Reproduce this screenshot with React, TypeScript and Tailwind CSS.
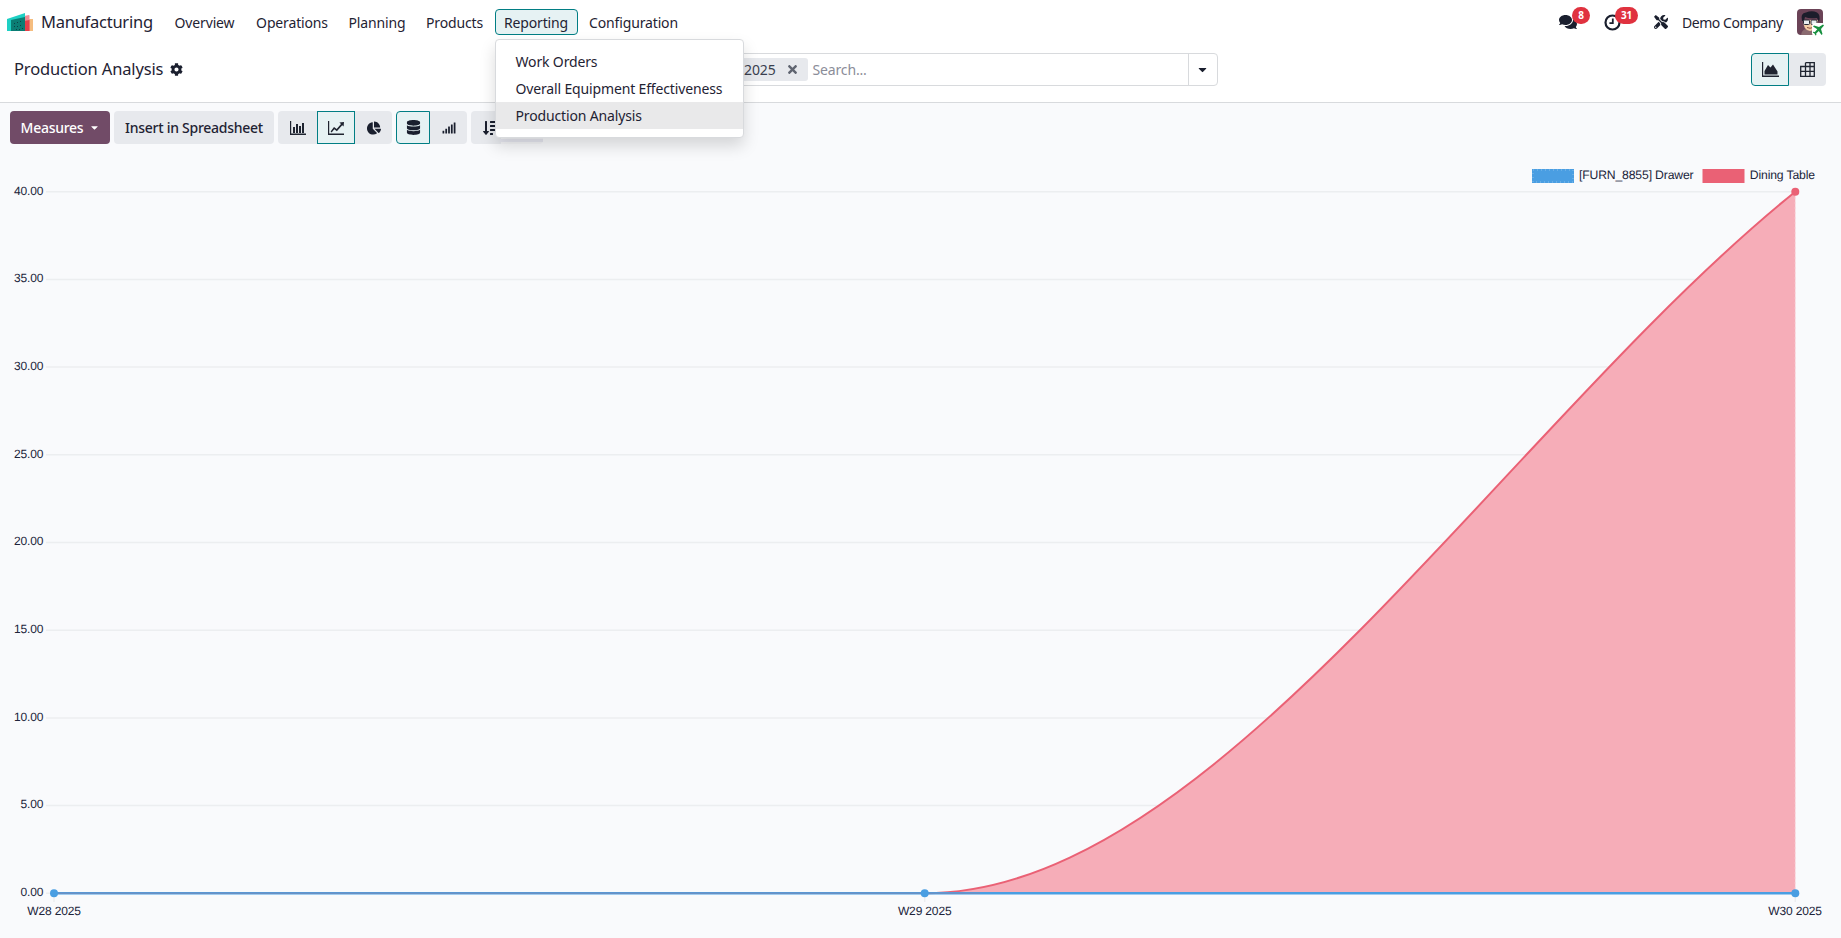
import React from "react";
import { FaCog, FaComments, FaTools, FaChartPie, FaDatabase, FaSignal, FaSortAmountDown, FaCaretDown, FaTimes } from "react-icons/fa";

const NAV: [string, string][] = [
  ["Overview", "w-[80px]"],
  ["Operations", "w-[91px]"],
  ["Planning", "w-[75px]"],
  ["Products", "w-[76px]"],
];

function Logo() {
  return (
    <svg width="28" height="19" viewBox="0 0 28 19" className="shrink-0">
      <path d="M22 6 L27 6 L27 18 L22 18 Z" fill="#f5bd7f" />
      <path d="M18 3 L23 2 Q23.5 2 23.5 3 L23.5 18 L18 18 Z" fill="#f08c96" />
      <path d="M18 8 L23.5 7 L23.5 18 L18 18 Z" fill="#e63f4a" />
      <path d="M1 6 L19 0 L19 18 L1 18 Z" fill="#1ed0c4" />
      <path d="M5 7 L19 4 L19 18 L5 18 Z" fill="#0b7d74" />
      <path d="M8 10h1v1H8zM11 9h1v1h-1zM14 8h1v1h-1zM8 13h1v1H8zM11 13h1v1h-1zM14 12h1v1h-1zM16 15h1v1h-1zM10 16h1v1h-1zM13 16h1v1h-1z" fill="#0c3f45" />
    </svg>
  );
}

function Avatar() {
  return (
    <div className="relative w-[26px] h-[26px] shrink-0">
      <svg width="26" height="26" viewBox="0 0 26 26" className="rounded-[4px]">
        <rect width="26" height="26" fill="#6b4357" />
        <path d="M4 26 Q5 19 13 19 Q21 19 22 26 Z" fill="#8a6a70" />
        <path d="M6 11 Q6 21 13 22 Q21 21 21 11 Z" fill="#f4cfa8" />
        <path d="M5 12 Q3 4 9 3.5 Q15 1 20 3.5 Q24 6 22 13 L20 9 Q12 10 8 8 L7 12 Z" fill="#1b1d2b" />
        <rect x="6.5" y="11" width="6" height="4.5" rx="1" fill="#e9eef0" stroke="#2a2a35" strokeWidth="1" />
        <rect x="14" y="11" width="6" height="4.5" rx="1" fill="#e9eef0" stroke="#2a2a35" strokeWidth="1" />
        <path d="M10 18.5 Q13 20 16 18.5" stroke="#8a4b3c" strokeWidth="1" fill="none" />
      </svg>
      <svg width="13" height="13" viewBox="0 0 13 13" className="absolute right-[-2px] bottom-[-1px]">
        <rect width="13" height="13" rx="3" fill="#ffffff" />
        <path d="M11 1.5 L12 2.5 L9 6 L10.5 11 L9.5 12 L6.8 8 L4.2 10.5 L4.4 12 L3.5 12.5 L2.5 10.5 L0.8 9.5 L1.2 8.8 L2.8 9 L5.3 6.3 L1 3.5 L2 2.5 L7 4 Z" fill="#17903f" />
      </svg>
    </div>
  );
}

function ClockIcon() {
  return (
    <svg width="17" height="17" viewBox="0 0 17 17" fill="none" stroke="#1a1f2e">
      <circle cx="8.5" cy="8.5" r="7" strokeWidth="2.2" />
      <path d="M8.8 4.5 V9.2 H5.4" strokeWidth="1.8" />
    </svg>
  );
}
function BarIcon() {
  return (
    <svg width="16" height="14" viewBox="0 0 16 14" fill="#1f2430">
      <path d="M0 0h1.2v12.6H16V14H0z" />
      <path d="M3 6h2v6H3zM6 3h2v9H6zM9 5h2v7H9zM12 2h2v10h-2z" />
    </svg>
  );
}
function LineIcon() {
  return (
    <svg width="16" height="14" viewBox="0 0 16 14" fill="#1f2430">
      <path d="M0 0h1.2v12.6H16V14H0z" />
      <path d="M2.6 10.5 L6 6 L8.7 8 L13 3 L11.4 1.6 L16 1 L15.6 5.6 L14.2 4.2 L8.9 10.2 L6.3 8.2 L3.6 11.6 Z" />
    </svg>
  );
}
function AreaIcon() {
  return (
    <svg width="17" height="15" viewBox="0 0 17 15" fill="#1f2430">
      <path d="M0 0h1.2v13.6H17V15H0z" />
      <path d="M2.5 12.5 V9 L6 3 L8.5 5.5 L11 2.5 L15.5 9.5 V12.5 Z" />
    </svg>
  );
}
function TableIcon() {
  return (
    <svg width="15" height="15" viewBox="0 0 15 15" fill="none" stroke="#1f2430" strokeWidth="1.3">
      <path d="M5.5 .7 H14.3 V14.3 H.7 V4.5 H14.3 M.7 9.4 H14.3 M5.5 .7 V14.3 M10 .7 V14.3" />
    </svg>
  );
}

const GRID = [191.7, 279.4, 367.1, 454.8, 542.5, 630.2, 717.9, 805.6, 893.3];
const YL = ["40.00", "35.00", "30.00", "25.00", "20.00", "15.00", "10.00", "5.00", "0.00"];
const BLUE = "#4a9ee2";

function Chart() {
  const lab = { fontFamily: '"Liberation Sans", Arial, sans-serif', fontSize: 12, fill: "#20243a", textRendering: "geometricPrecision" as const };
  const leg = { ...lab, fontSize: 12.2 };
  return (
    <svg width="1841" height="788" viewBox="0 150 1841 788" className="block">
      {GRID.map((y) => (
        <line key={y} x1="46" x2="1795.3" y1={y} y2={y} stroke="#eceef0" strokeWidth="1.5" />
      ))}
      {[54, 924.7, 1795.3].map((x) => (
        <line key={x} x1={x} x2={x} y1="893" y2="902" stroke="#eceef0" strokeWidth="1.5" />
      ))}
      {YL.map((t, i) => (
        <text key={t} x="43.3" y={GRID[i] + 2.8} textAnchor="end" style={lab}>{t}</text>
      ))}
      <text x="54" y="915" textAnchor="middle" style={lab}>W28 2025</text>
      <text x="924.7" y="915" textAnchor="middle" style={lab}>W29 2025</text>
      <text x="1795" y="915" textAnchor="middle" style={lab}>W30 2025</text>

      <rect x="1532" y="169" width="42" height="14" fill={BLUE} />
      <rect x="1533" y="170" width="40" height="12" fill="none" stroke="#ffffff" strokeOpacity="0.45" strokeWidth="0.8" strokeDasharray="1 3" />
      <text x="1579" y="179" style={leg}>[FURN_8855] Drawer</text>
      <rect x="1702.5" y="169" width="42" height="14" fill="#EA6175" />
      <text x="1749.8" y="179" style={leg}>Dining Table</text>

      <path d="M924.7 893.3 C1215 893.3 1505 425.6 1795.3 191.7 L1795.3 893.3 Z" fill="#f6adb8" />
      <path d="M924.7 893.3 C1215 893.3 1505 425.6 1795.3 191.7" fill="none" stroke="#EA6175" strokeWidth="2" />
      <line x1="1795.3" x2="1795.3" y1="192" y2="893" stroke="#fbd9de" strokeWidth="1" strokeDasharray="2 3" />
      <line x1="54" x2="1795.3" y1="893.3" y2="893.3" stroke={BLUE} strokeWidth="2.4" />
      <line x1="54" x2="980" y1="893.3" y2="893.3" stroke="#6a90c4" strokeWidth="1.6" />
      <circle cx="1795.3" cy="191.7" r="4" fill="#EA6175" />
      <circle cx="54" cy="893.3" r="4" fill={BLUE} />
      <circle cx="924.7" cy="893.3" r="4" fill={BLUE} />
      <circle cx="1795.3" cy="893.3" r="4" fill={BLUE} />
    </svg>
  );
}

const ui = "font-['Noto_Sans',sans-serif] tracking-[-0.15px]";

export default function App() {
  return (
    <div className={`w-[1841px] h-[938px] overflow-hidden bg-[#f9fafc] text-[#1f2333] text-[14px] ${ui}`}>
      {/* top navbar */}
      <header className="relative z-20 h-[46px] pb-[2px] bg-white flex items-center pl-[6px] pr-[18px]">
        <Logo />
        <span className="ml-[7px] w-[123.5px] text-[16.5px] tracking-[-0.25px] whitespace-nowrap">Manufacturing</span>
        <nav className="flex items-center gap-[2px]">
          {NAV.map(([t, w]) => (
            <span key={t} className={`${w} h-[26px] flex items-center justify-center whitespace-nowrap`}>{t}</span>
          ))}
          <div className="relative">
            <span className="w-[83px] h-[26px] flex items-center justify-center rounded-[4px] border border-[#017e84] bg-[#e6f2f3]">Reporting</span>
            <div className="absolute left-0 top-[29.5px] w-[249px] h-[99px] pt-[8px] bg-white border border-[#d8dadd] rounded-[4px] shadow-[0_8px_16px_rgba(0,0,0,0.15)]">
              <div className="h-[27px] pl-[20px] flex items-center whitespace-nowrap">Work Orders</div>
              <div className="h-[27px] pl-[20px] flex items-center whitespace-nowrap">Overall Equipment Effectiveness</div>
              <div className="h-[27px] pl-[20px] flex items-center whitespace-nowrap bg-[#e9e9ea]">Production Analysis</div>
            </div>
          </div>
          <span className="w-[108px] h-[26px] flex items-center justify-center whitespace-nowrap">Configuration</span>
        </nav>
        <div className="ml-auto flex items-center">
          <div className="relative w-[18px] h-[16px] flex items-center">
            <FaComments className="text-[#1a1f2e]" size={18} />
            <span className="absolute left-[13px] top-[-7px] w-[18px] h-[17px] rounded-full bg-[#e0323f] text-white text-[10px] font-bold flex items-center justify-center">8</span>
          </div>
          <div className="relative ml-[27px] w-[17px] h-[16px] flex items-center">
            <ClockIcon />
            <span className="absolute left-[11px] top-[-7px] w-[23px] h-[17px] rounded-full bg-[#e0323f] text-white text-[10px] font-bold flex items-center justify-center">31</span>
          </div>
          <FaTools className="ml-[33px] text-[#1a1f2e]" size={14} />
          <span className="ml-[14px] w-[101px] tracking-[-0.45px] whitespace-nowrap">Demo Company</span>
          <div className="ml-[14px]"><Avatar /></div>
        </div>
      </header>

      {/* control panel */}
      <section className="h-[57px] pb-[10px] bg-white border-b border-[#d8dadd] flex items-center pl-[14px] pr-[15px]">
        <span className="text-[16.5px] w-[150px] whitespace-nowrap">Production Analysis</span>
        <FaCog className="ml-[6px] text-[#1a1f2e]" size={13} />
        <div className="ml-[417px] w-[617.5px] h-[33px] flex items-center border border-[#d8dadd] rounded-[4px]">
          <div className="ml-auto" />
          <span className="h-[23px] w-[90px] bg-[#e7e9ed] rounded-[3px] flex items-center justify-end pr-[9px] gap-[10px] text-[#3a3f4f]">
            <span className="whitespace-nowrap">2025</span>
            <FaTimes className="text-[#5f6470]" size={13} />
          </span>
          <span className="ml-[5px] w-[375px] text-[#8b8d99] whitespace-nowrap">Search...</span>
          <span className="w-[29px] h-full border-l border-[#d8dadd] flex items-center justify-center">
            <FaCaretDown className="text-[#1a1f2e]" size={13} />
          </span>
        </div>
        <div className="ml-auto flex h-[33px]">
          <span className="w-[38px] flex items-center justify-center rounded-l-[4px] border border-[#017e84] bg-[#e6f2f3]"><AreaIcon /></span>
          <span className="w-[37px] flex items-center justify-center rounded-r-[4px] bg-[#e7e9ed]"><TableIcon /></span>
        </div>
      </section>

      {/* toolbar */}
      <div className="h-[47px] pt-[8px] pl-[10px] flex items-start text-[14px] font-medium tracking-[-0.27px]">
        <span className="w-[100px] h-[33px] pl-[1px] rounded-[4px] bg-[#714B67] text-white flex items-center justify-center gap-[6px]">
          Measures <FaCaretDown size={11} />
        </span>
        <span className="ml-[4px] w-[160px] h-[33px] rounded-[4px] bg-[#e7e9ed] flex items-center justify-center whitespace-nowrap">Insert in Spreadsheet</span>
        <div className="ml-[4px] flex h-[33px]">
          <span className="w-[39px] rounded-l-[4px] bg-[#e7e9ed] flex items-center justify-center"><BarIcon /></span>
          <span className="w-[38px] border border-[#017e84] bg-[#e6f2f3] flex items-center justify-center"><LineIcon /></span>
          <span className="w-[37px] rounded-r-[4px] bg-[#e7e9ed] flex items-center justify-center"><FaChartPie size={14} className="text-[#1a1f2e]" /></span>
        </div>
        <div className="ml-[4px] flex h-[33px]">
          <span className="w-[34px] rounded-l-[4px] border border-[#017e84] bg-[#e6f2f3] flex items-center justify-center"><FaDatabase size={15} className="text-[#1a1f2e]" /></span>
          <span className="w-[37px] rounded-r-[4px] bg-[#e7e9ed] flex items-center justify-center"><FaSignal size={14} className="text-[#1a1f2e]" /></span>
        </div>
        <span className="relative ml-[4px] w-[72px] h-[33px] flex items-center pl-[12px]">
          <span className="absolute left-0 top-0 h-full w-[30px] rounded-l-[4px] bg-[#e7e9ed]" />
          <span className="absolute left-[30px] top-0 h-full w-[42px] rounded-r-[4px] bg-[#f3f4f7]" />
          <FaSortAmountDown size={16} className="relative text-[#1a1f2e]" />
          <span className="absolute left-[29px] bottom-[2px] w-[43px] h-[3px] bg-[#e6e7f0]" />
        </span>
      </div>

      <Chart />
    </div>
  );
}
